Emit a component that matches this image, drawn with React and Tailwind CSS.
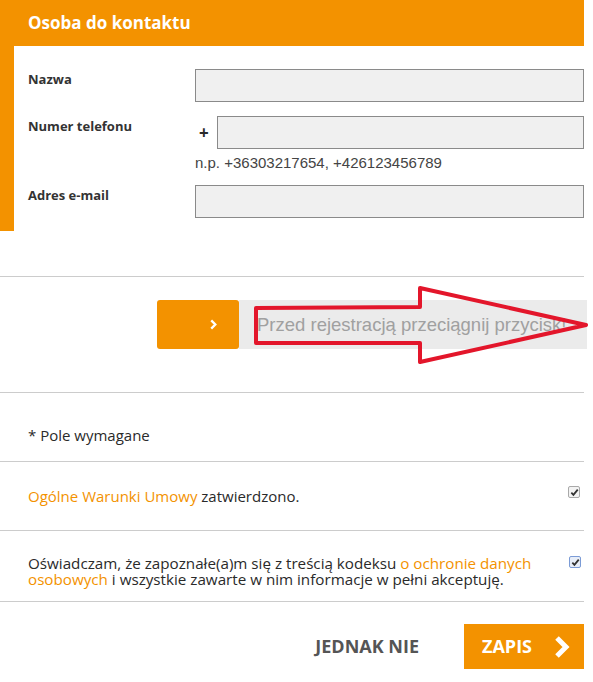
import { useState } from 'react';

const orange = 'text-[#f39200]';

function Field({ label, children }) {
  return (
    <div className="flex">
      <div className="w-[167px] shrink-0 pt-[1px] text-[13px] font-bold leading-[18px] text-[#333]">{label}</div>
      <div className="flex-1">{children}</div>
    </div>
  );
}

function TextInput() {
  return <input className="h-[33px] w-full border border-[#8a8a8a] bg-[#f0f0f0] px-2 outline-none" />;
}

function Check({ checked, focused }) {
  return (
    <span
      className={`flex h-[12px] w-[12px] items-center justify-center rounded-[2px] border ${
        focused ? 'border-[#7b9bd6] bg-[#e8eef8]' : 'border-[#a9a9a9] bg-[#f3f3f3]'
      }`}
    >
      {checked && (
        <svg viewBox="0 0 10 10" className="h-[9px] w-[9px]">
          <path d="M1.5 5.2 L3.8 7.6 L8.6 1.8" fill="none" stroke="#333" strokeWidth="2" />
        </svg>
      )}
    </span>
  );
}

export default function App() {
  const [phone, setPhone] = useState('');

  return (
    <div className="w-[593px] bg-white font-['Open_Sans',sans-serif] text-[#2a2a2a]">
      <div className="w-[584px]">
        {/* Contact person */}
        <div className="flex h-[46px] items-center bg-[#f39200] px-[28px] text-[17px] font-bold text-white">
          Osoba do kontaktu
        </div>
        <div className="flex flex-col gap-[14px] border-l-[14px] border-[#f39200] pb-[13px] pl-[14px] pt-[23px]">
          <Field label="Nazwa">
            <TextInput />
          </Field>
          <Field label="Numer telefonu">
            <div className="flex items-center">
              <span className="w-[22px] pl-[4px] text-[17px] font-bold">+</span>
              <input
                value={phone}
                onChange={(e) => setPhone(e.target.value)}
                className="h-[33px] flex-1 border border-[#8a8a8a] bg-[#f0f0f0] px-2 outline-none"
              />
            </div>
            <p className="mt-[6px] font-['Liberation_Sans',sans-serif] text-[15px] leading-[16px] text-[#444]">
              n.p. +36303217654, +426123456789
            </p>
          </Field>
          <Field label="Adres e-mail">
            <TextInput />
          </Field>
        </div>

        {/* Drag slider */}
        <div className="mt-[45px] border-t border-[#ccc]">
          <div className="relative h-[115px] pt-[23px]">
            <div className="ml-[157px] flex h-[49px] w-[430px]">
              <button className="flex w-[82px] items-center justify-center rounded-[3px] bg-[#f39200] pl-[30px] text-[18px] font-bold text-white">
                <svg viewBox="0 0 10 12" className="h-[11px] w-[9px]">
                  <path d="M2.5 1.5 L7 6 L2.5 10.5" fill="none" stroke="#fff" strokeWidth="2.6" />
                </svg>
              </button>
              <div className="flex flex-1 items-center bg-[#ebebeb] pl-[18px] font-['Liberation_Sans',sans-serif] text-[18.5px] text-[#a0a0a0]">
                Przed rejestracją przeciągnij przycisk!
              </div>
            </div>
            <svg className="pointer-events-none absolute left-0 top-0" width="593" height="115" viewBox="0 0 593 115">
              <path
                d="M256 31 L420 30 L420 11 L586 48 L420 85 L420 66 L256 66 Z"
                fill="none"
                stroke="#e3162b"
                strokeWidth="4"
                strokeLinejoin="round"
              />
            </svg>
          </div>
        </div>

        {/* Required note */}
        <div className="flex h-[69px] items-center border-t border-[#ccc] px-[28px] pt-[16px] text-[15px]">
          * Pole wymagane
        </div>

        {/* Terms */}
        <div className="flex h-[69px] items-center justify-between border-t border-[#ccc] pl-[28px] pr-[4px] text-[15px]">
          <p>
            <span className={orange}>Ogólne Warunki Umowy</span> zatwierdzono.
          </p>
          <span className="-mt-[8px]">
            <Check checked />
          </span>
        </div>

        <div className="flex h-[71px] items-center justify-between border-t border-[#ccc] pl-[28px] pr-[3px] text-[15.2px]">
          <p className="mt-[10px] w-[525px] leading-[16px]">
            Oświadczam, że zapoznałe(a)m się z treścią kodeksu{' '}
            <span className={orange}>o ochronie danych osobowych</span> i wszystkie zawarte w nim informacje w pełni
            akceptuję.
          </p>
          <span className="-mt-[8px]">
            <Check checked focused />
          </span>
        </div>

        {/* Actions */}
        <div className="flex items-center justify-end gap-[45px] border-t border-[#ccc] pt-[22px]">
          <button className="text-[18px] font-bold text-[#555]">JEDNAK NIE</button>
          <button className="flex h-[45px] w-[120px] items-center justify-between bg-[#f39200] pl-[18px] pr-[12px] text-[18px] font-bold text-white">
            ZAPIS
            <svg viewBox="0 0 20 24" className="h-[24px] w-[20px]">
              <path d="M5 3 L14 12 L5 21" fill="none" stroke="#fff" strokeWidth="5" />
            </svg>
          </button>
        </div>
        <div className="h-[13px]" />
      </div>
    </div>
  );
}
